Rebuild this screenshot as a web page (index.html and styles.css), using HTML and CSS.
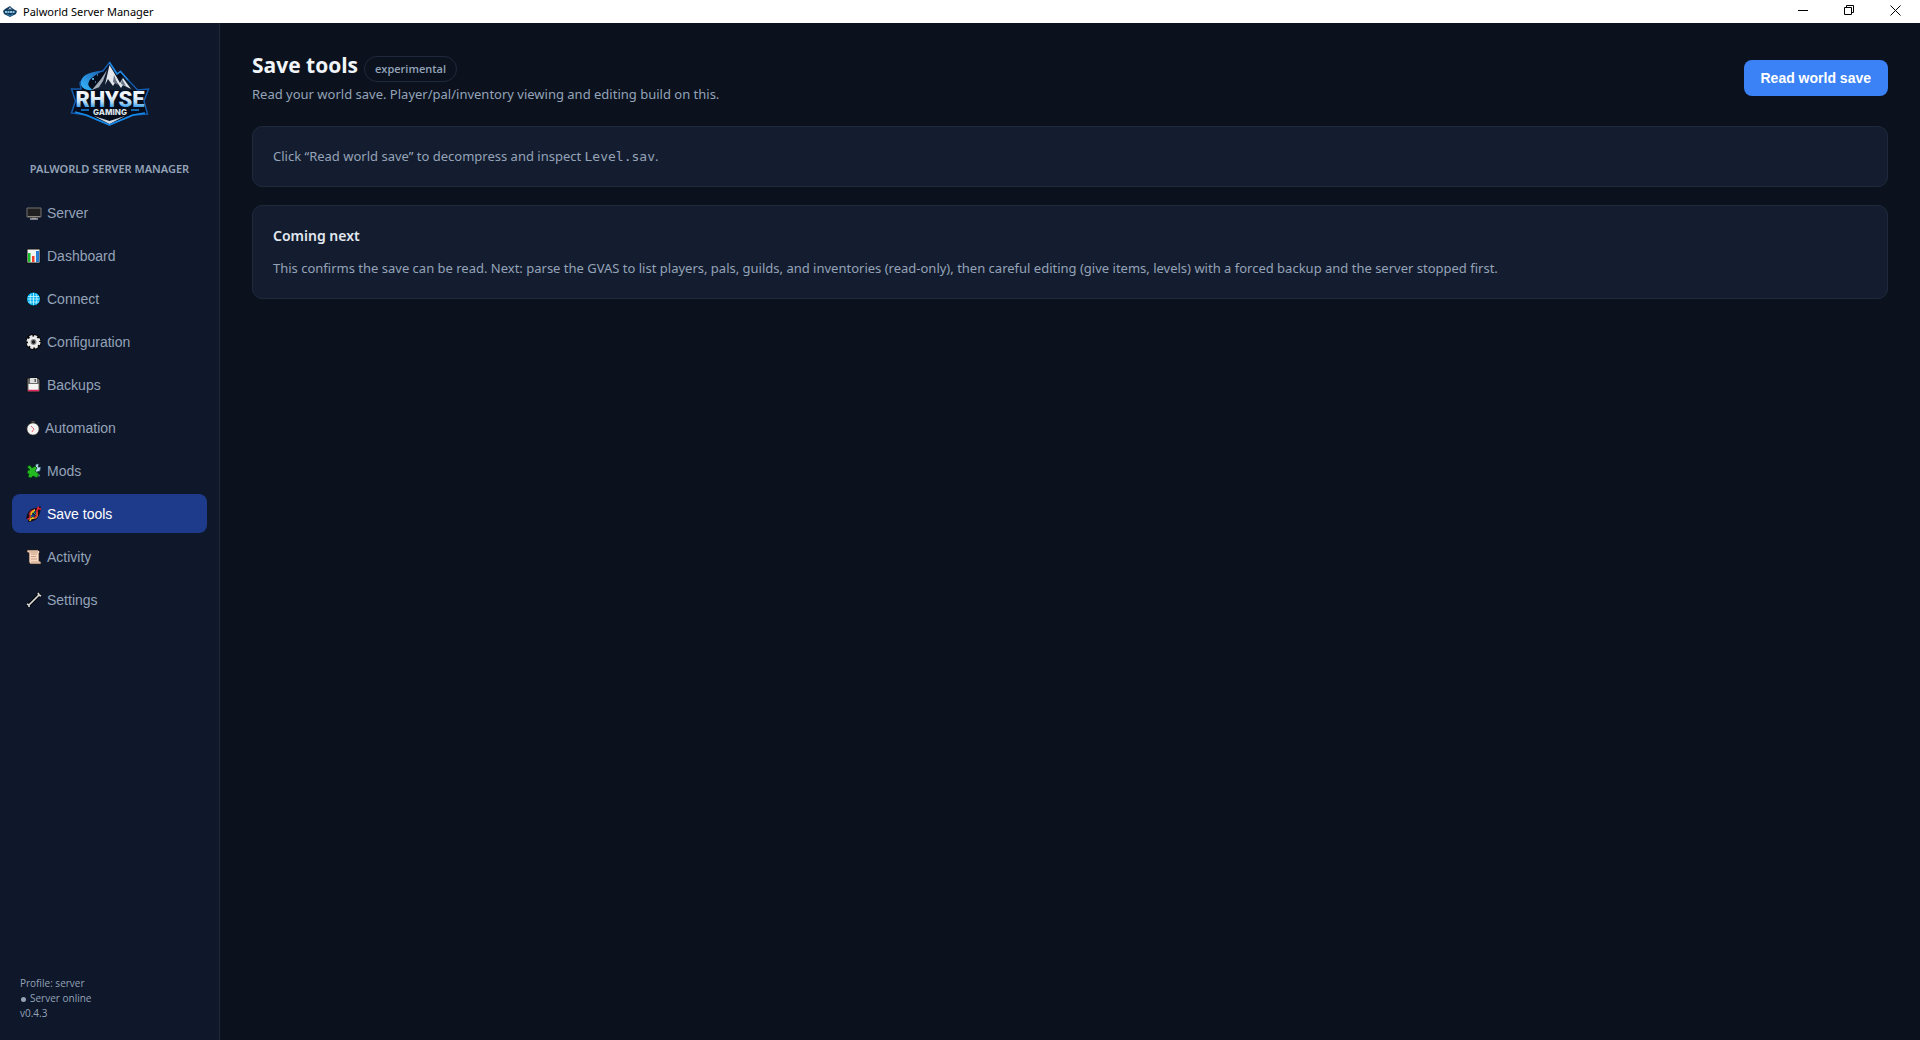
FILE: index.html
```html
<!DOCTYPE html>
<html lang="en">
<head>
<meta charset="utf-8">
<title>Palworld Server Manager</title>
<link rel="stylesheet" href="styles.css">
</head>
<body>
<svg width="0" height="0" class="defs" aria-hidden="true">
  <defs>
    <linearGradient id="ice" x1="0" y1="0" x2="0" y2="1">
      <stop offset="0.35" stop-color="#f2f5f9"/><stop offset="0.6" stop-color="#b9dcf5"/><stop offset="0.85" stop-color="#1c8fe6"/>
    </linearGradient>
    <linearGradient id="swoosh" x1="1" y1="0" x2="0" y2="1">
      <stop offset="0" stop-color="#1b5fae"/><stop offset="1" stop-color="#35b8ff"/>
    </linearGradient>
    <symbol id="logo" viewBox="0 0 80 66">
      <path d="M39.500 1.500 47 13 50.500 10.500 58 19 67.500 29 78.500 28 74 40 77.500 53 63 54 39.500 64 16 54 1.500 52 5.500 40 1.500 28 11 28 10 22Q16 12 33 10Z" fill="#050d1c" stroke="#145cae" stroke-width="1.500"/>
      <path d="M39.500 4 45 14 50 20 52 15 65 29H21L30 20Z" fill="#111d31"/>
      <path d="M39.500 4 46 15 50 22 53 17 61 28 53 24 51 27 46 20 43 25 38 18 35 24Z" fill="#e3e7ed"/>
      <path d="M37 9 33 20 29 26 32 25 22 29 31 18Z" fill="#a4abb8"/>
      <path d="M44 14 48 24 43 21ZM52 18 56 25 51 23Z" fill="#687386"/>
      <path d="M33 10Q9 11 11 24 13 30 23 29 10 21 33 10Z" fill="url(#swoosh)"/>
      <path d="M22 18h2m-1-1v2M27 14h1M25 21h1" stroke="#72cfff"/>
      <text x="40" y="46" class="logo-name">RHYSE</text>
      <path d="M11 49h8m42 0h8" stroke="#1685df" stroke-width="1.500"/>
      <text x="40" y="54" class="logo-sub">GAMING</text>
      <path d="M24 55 39.500 60 55 55 39.500 63Z" fill="#cfd8e3"/>
      <path d="M39.500 1.500 47 13 50.500 10.500 58 19" fill="none" stroke="#2387df" stroke-width="1.500"/>
      <path d="M5 51 16 54 39.500 64 63 54 75 52" fill="none" stroke="#168bea" stroke-width="1.500"/>
    </symbol>
  </defs>
</svg>
<div class="window">
  <header class="titlebar">
    <svg class="app-icon" aria-hidden="true" viewBox="0 0 14 11"><path d="M7 0 9 2 12 4 14 5 13 8 7 11 1 8 0 5 2 3Z" fill="#123e61"/><path d="m7 1 2 3-2-1-2 1Z" fill="#b5c6d1"/><path d="M2 6h10" stroke="#8fc0dd" stroke-width="2" stroke-dasharray="2 .5"/><path d="m4 8 3 2 3-2" fill="none" stroke="#3285b7"/></svg>
    <span class="window-title">Palworld Server Manager</span>
    <div class="window-controls">
      <button type="button" aria-label="Minimize"><svg viewBox="0 0 11 11"><path d="M0 5.500h10"/></svg></button>
      <button type="button" aria-label="Restore"><svg viewBox="0 0 11 11"><path d="M.5 2.500h7v7h-7zM2.500 2.500v-2h7v7h-2"/></svg></button>
      <button type="button" aria-label="Close"><svg viewBox="0 0 11 11"><path d="m.5.5 10 10m0-10-10 10"/></svg></button>
    </div>
  </header>
  <div class="app">
    <aside class="sidebar">
      <svg class="logo" role="img" aria-label="Rhyse Gaming"><use href="#logo"/></svg>
      <div class="brand">PALWORLD SERVER MANAGER</div>
      <nav class="nav">
        <button type="button"><svg class="icon" viewBox="0 0 16 16"><path d="M1 3h14v9H1z" fill="#202020" stroke="#77736e"/><path d="M2 11.500h12" stroke="#8d8780"/><path d="M6 12h4v2H6z" fill="#555"/><path d="M4 14h8" stroke="#eee"/></svg>Server</button>
        <button type="button"><svg class="icon" viewBox="0 0 16 16"><path d="M1 1h13v14H1z" fill="#f3f3f3" stroke="#111"/><path d="M2 5h2.500v9H2z" fill="#17bd27"/><path d="M6 8h2.500v6H6z" fill="#ef3f2c"/><path d="M10 3h3v11h-3z" fill="#277ed5"/></svg>Dashboard</button>
        <button type="button"><svg class="icon" viewBox="0 0 16 16"><circle cx="7.500" cy="8" r="7" fill="#00adf0" stroke="#111"/><path d="M2 5.500h11M1.500 8h12M2 11h11M7.500 2v12M5 3Q3 8 5 13M10 3Q12 8 10 13" fill="none" stroke="#b9f1ff" stroke-width=".9"/></svg>Connect</button>
        <button type="button"><svg class="icon" viewBox="0 0 16 16"><circle cx="7.500" cy="8" r="6" fill="none" stroke="#080808" stroke-width="4"/><circle cx="7.500" cy="8" r="6" fill="none" stroke="#e7e7e7" stroke-width="2" stroke-dasharray="3 1.700"/><circle cx="7.500" cy="8" r="4.300" fill="#aaa" stroke="#eee" stroke-width="2.600"/><circle cx="7.500" cy="8" r="2.300" fill="#1b1b1b" stroke="#888"/></svg>Configuration</button>
        <button type="button"><svg class="icon" viewBox="0 0 16 16"><path d="M1 1h11l2 2v12H1z" fill="#6b6b6b" stroke="#111"/><path d="M4 1h7v5H4z" fill="#ddd"/><path d="M8.500 2h1.500v3H8.500z" fill="#555"/><path d="M2.500 7h10v7h-10z" fill="#f4f4f4"/><path d="M2 13.500h11" stroke="#e3205f" stroke-width="1.500"/></svg>Backups</button>
        <button type="button"><svg class="icon icon-narrow" viewBox="0 0 14 16"><path d="M5 1h4v3H5z" fill="#8b8b8b" stroke="#161616"/><circle cx="7" cy="9" r="6.300" fill="#f5f5f3" stroke="#111"/><path d="m5 6 3 3-2 3" fill="none" stroke="#e8455c" stroke-width=".8"/></svg>Automation</button>
        <button type="button"><svg class="icon" viewBox="0 0 16 16"><path d="m9 5 1-4h3l-1 3 3 0-1 4-3 1 3 3-1 2-5-5Z" fill="#b8d8ed" stroke="#183846" stroke-width=".7"/><path d="m1 4 3-2 2 3 3-2 2 2-2 3 4 3-2 4-4-2-2 2-3-1 1-3-2-1 1-3 2 0Z" fill="#24ba22" stroke="#063d0b" stroke-width=".8"/></svg>Mods</button>
        <button type="button" class="active" aria-current="page"><svg class="icon" viewBox="0 0 16 16"><path d="M1.500 13Q3 5 8 4T14.500 2M2 14.500Q10 14 12 8T13 1" fill="none" stroke="#170f15" stroke-width="3"/><path d="M4 10 8 13M6 6 11 10" stroke="#170f15" stroke-width="2"/><path d="m4 9 4 4m-1-7 4 4" stroke="#35b44b"/><path d="M1.500 13Q5 13 4 9T9 4" fill="none" stroke="#df2635" stroke-width="1.500"/><path d="M4 15Q4 12 8 12T11 6" fill="none" stroke="#f2c51a" stroke-width="1.500"/><path d="M5 9Q5 6 9 4" fill="none" stroke="#f2c51a" stroke-width="1.500"/><path d="M8 12Q12 10 11 6T15 3M11 6Q11 2 13 1" fill="none" stroke="#df2635" stroke-width="1.500"/></svg>Save tools</button>
        <button type="button"><svg class="icon" viewBox="0 0 16 16"><path d="M1 1h11l2 2-1 1v8l2 1v2H4l-1-2V4L1 3Z" fill="#f8d9c3" stroke="#2e2018" stroke-width=".7"/><path d="M5 5h6M5 7.500h5M5 10h6M3 3h9M5 13h9" stroke="#bd8f73" stroke-width=".8"/></svg>Activity</button>
        <button type="button"><svg class="icon" viewBox="0 0 16 16"><path d="m3 13 10-10M1 12l2 1v2M12 1l1 2 2 1" fill="none" stroke="#090909" stroke-width="3.700"/><path d="m3 13 10-10M1 12l2 1v2M12 1l1 2 2 1" fill="none" stroke="#dadada" stroke-width="1.700"/></svg>Settings</button>
      </nav>
      <div class="status">
        <div>Profile: server</div>
        <div><span class="dot"></span>Server online</div>
        <div>v0.4.3</div>
      </div>
    </aside>
    <main class="main">
      <div class="page-head">
        <div>
          <div class="title-row"><h1>Save tools</h1><span class="badge">experimental</span></div>
          <p>Read your world save. Player/pal/inventory viewing and editing build on this.</p>
        </div>
        <button type="button" class="primary">Read world save</button>
      </div>
      <section class="card"><p>Click “Read world save” to decompress and inspect <code>Level.sav</code>.</p></section>
      <section class="card">
        <h2>Coming next</h2>
        <p>This confirms the save can be read. Next: parse the GVAS to list players, pals, guilds, and inventories (read-only), then careful editing (give items, levels) with a forced backup and the server stopped first.</p>
      </section>
    </main>
  </div>
</div>
</body>
</html>
```
FILE: styles.css
```css
* { box-sizing: border-box; }

body {
  margin: 0;
  background: #0b121e;
  color: #94a3b8;
  font: 13px/19px "Noto Sans", "Open Sans", sans-serif;
}

h1, h2, p { margin: 0; }

button {
  border: 0;
  font-family: "Liberation Sans", Arial, sans-serif;
}

.defs { position: absolute; }

.window {
  display: flex;
  flex-direction: column;
  min-height: 100vh;
}

.titlebar {
  display: flex;
  align-items: center;
  gap: 6px;
  height: 23px;
  padding-left: 3px;
  background: #fff;
  color: #000;
}

.app-icon { width: 14px; height: 11px; }

.window-title { font-size: 11px; }

.window-controls {
  display: flex;
  height: 100%;
  margin-left: auto;
  padding-right: 2px;
}

.window-controls button {
  width: 46px;
  padding: 0 0 2px;
  background: none;
}

.window-controls svg {
  display: block;
  width: 11px;
  height: 11px;
  margin: 0 auto;
  fill: none;
  stroke: #000;
  stroke-width: 1;
}

.app { display: flex; flex: 1; }

.sidebar {
  display: flex;
  flex-direction: column;
  flex: 0 0 220px;
  padding: 38px 12px 19px;
  background: #0f172a;
  border-right: 1px solid #1e293b;
}

.logo {
  width: 80px;
  height: 66px;
  margin: 0 auto;
}

.logo-name {
  fill: url(#ice);
  font: 900 22px Roboto, sans-serif;
  text-anchor: middle;
}

.logo-sub {
  fill: #dce2e9;
  font: 800 8px Inter, sans-serif;
  text-anchor: middle;
}

.brand {
  margin: 32px 0 15px;
  font-size: 11px;
  font-weight: 600;
  text-align: center;
}

.nav {
  display: flex;
  flex-direction: column;
  gap: 4px;
}

.nav button {
  display: flex;
  align-items: center;
  gap: 5px;
  height: 39px;
  padding: 0 14px;
  border-radius: 8px;
  background: none;
  color: #94a3b8;
  font-size: 14px;
}

.nav .active { background: #1e3a8a; color: #fff; }

.icon { width: 16px; height: 16px; }

.icon-narrow { width: 14px; }

.status {
  margin-top: auto;
  padding: 0 8px;
  font-family: "Open Sans", "Noto Sans", sans-serif;
  font-size: 10px;
  line-height: 15px;
}

.dot {
  display: inline-block;
  width: 5px;
  height: 5px;
  margin: 0 4px 0 1px;
  border-radius: 50%;
  background: #94a3b8;
}

.main {
  flex: 1;
  min-width: 0;
  padding: 28px 32px;
}

.page-head {
  display: flex;
  align-items: center;
  justify-content: space-between;
  margin-bottom: 22px;
}

.page-head p { margin-top: 3px; }

.title-row {
  display: flex;
  align-items: baseline;
  gap: 6px;
  font-family: "Open Sans", "Noto Sans", sans-serif;
}

h1 {
  color: #f1f5f9;
  font-size: 21px;
  font-weight: 700;
  line-height: 28px;
}

.badge {
  padding: 3px 10px;
  border: 1px solid #1e293b;
  border-radius: 13px;
  font-size: 11px;
  font-weight: 600;
  line-height: 18px;
}

.primary {
  height: 36px;
  padding: 0 17px;
  border-radius: 8px;
  background: #3b82f6;
  color: #fff;
  font-size: 14px;
  font-weight: 700;
}

.card {
  padding: 20px;
  border: 1px solid #1e293b;
  border-radius: 10px;
  background: #141d2f;
}

.card + .card { margin-top: 18px; }

h2 {
  margin-bottom: 13px;
  color: #e2e8f0;
  font-size: 14px;
  font-weight: 600;
  line-height: 20px;
}

code { font: 13px/1 "DejaVu Sans Mono", monospace; }
```
